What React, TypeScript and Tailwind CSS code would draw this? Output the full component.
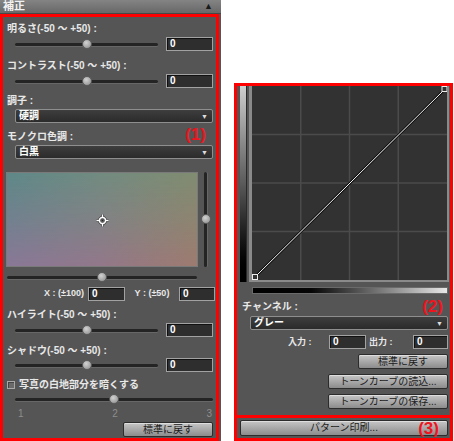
import React from 'react';

// shared bits for the dark "補正" panels
function Label({ children, className = '' }: { children: React.ReactNode; className?: string }) {
  return (
    <div className={`h-[14px] leading-[14px] text-[10px] font-bold text-[#e8e8e8] whitespace-nowrap ${className}`}>
      {children}
    </div>
  );
}

function NumBox({ className = '' }: { className?: string }) {
  return (
    <div
      className={`h-[14px] shrink-0 border border-[#a2a2a2] bg-[#2e2e2e] shadow-[inset_1px_1px_0_#111] flex items-center pl-[3px] text-[10px] font-bold text-white leading-none ${className}`}
    >
      0
    </div>
  );
}

function Track({ className = '', thumb }: { className?: string; thumb: string }) {
  return (
    <div className={`relative h-[3px] shrink-0 rounded-full bg-[#242424] shadow-[0_1px_0_#676767] ${className}`}>
      <div
        className={`absolute top-1/2 -translate-y-1/2 w-[10px] h-[10px] rounded-full border border-[#5c5c5c] bg-[radial-gradient(circle_at_40%_35%,#d2d2d2,#8a8a8a)] ${thumb}`}
      />
    </div>
  );
}

function SliderRow({ className = '' }: { className?: string }) {
  return (
    <div className={`h-[14px] flex items-center ${className}`}>
      <Track className="ml-[12px] w-[143px]" thumb="left-[67px]" />
      <NumBox className="ml-[8px] w-[47px]" />
    </div>
  );
}

function Select({ value, className = '' }: { value: string; className?: string }) {
  return (
    <div
      className={`h-[14px] flex items-center justify-between rounded-[2px] border border-[#8e8e8e] bg-gradient-to-b from-[#3e3e3e] to-[#2b2b2b] pl-[3px] pr-[4px] ${className}`}
    >
      <span className="text-[10px] font-bold text-white leading-none">{value}</span>
      <span className="text-[7px] text-[#dddddd] leading-none">▼</span>
    </div>
  );
}

function Btn({ children, className = '' }: { children: React.ReactNode; className?: string }) {
  return (
    <div
      className={`flex items-center justify-center rounded-[2px] border border-[#2c2c2c] bg-gradient-to-b from-[#c6c6c6] to-[#8c8c8c] shadow-[inset_0_1px_0_#dedede] text-[10px] text-[#1c1c1c] leading-none whitespace-nowrap ${className}`}
    >
      {children}
    </div>
  );
}

function Note({ n, className = '' }: { n: number; className?: string }) {
  return <span className={`text-[17px] font-bold text-[#f0141e] leading-none ${className}`}>({n})</span>;
}

function Crosshair() {
  return (
    <svg width="13" height="13" viewBox="0 0 13 13" className="absolute left-[89px] top-[41px]">
      <g stroke="#3a3a3a" strokeWidth="3" fill="none">
        <circle cx="6.5" cy="6.5" r="3" />
        <path d="M6.5 0.5v2.5M6.5 10v2.5M0.5 6.5h2.5M10 6.5h2.5" />
      </g>
      <g stroke="#ffffff" strokeWidth="1.4" fill="none">
        <circle cx="6.5" cy="6.5" r="3" />
        <path d="M6.5 0.5v2.5M6.5 10v2.5M0.5 6.5h2.5M10 6.5h2.5" />
      </g>
      <circle cx="6.5" cy="6.5" r="1" fill="#222" />
    </svg>
  );
}

function LeftPanel() {
  return (
    <div className="w-[221px] h-[441px] shrink-0 bg-[#555555] flex flex-col">
      <div className="h-[14px] shrink-0 flex items-center justify-between pl-[3px] pr-[8px] bg-gradient-to-b from-[#848484] to-[#686868] border-b border-[#474747]">
        <span className="text-[11px] font-bold text-[#f2f2f2] leading-none">補正</span>
        <span className="text-[9px] text-[#1a1a1a] leading-none">▲</span>
      </div>
      <div className="flex-1 mr-[2px] border-[3px] border-[#ff0000] flex flex-col">
        <Label className="mt-[5px] pl-[4px]">明るさ(-50 ～ +50) :</Label>
        <SliderRow className="mt-[1px]" />
        <Label className="mt-[8px] pl-[4px]">コントラスト(-50 ～ +50) :</Label>
        <SliderRow className="mt-[1px]" />
        <Label className="mt-[6px] pl-[4px]">調子 :</Label>
        <Select value="硬調" className="mt-[1px] ml-[12px] w-[198px]" />
        <div className="mt-[7px] h-[14px] flex items-center justify-between pl-[4px] pr-[10px]">
          <Label>モノクロ色調 :</Label>
          <Note n={1} className="-mt-[5px]" />
        </div>
        <Select value="白黒" className="mt-[1px] ml-[12px] w-[198px]" />

        <div className="mt-[13px] h-[95px] flex">
          <div className="relative ml-[3px] w-[192px] h-[95px] border border-[#7a7a7a] bg-[linear-gradient(to_right,#8a7898,#93788a_50%,#9f7b70)]">
            <div className="absolute inset-0 bg-[linear-gradient(to_right,#5e8888,#728b80_50%,#808c70)] [mask-image:linear-gradient(to_bottom,#000_0%,rgba(0,0,0,0.55)_50%,transparent_100%)]" />
            <Crosshair />
          </div>
          <div className="relative ml-[6px] w-[3px] h-[95px] rounded-full bg-[#242424] shadow-[1px_0_0_#676767]">
            <div className="absolute top-[42px] left-1/2 -translate-x-1/2 w-[10px] h-[10px] rounded-full border border-[#5c5c5c] bg-[radial-gradient(circle_at_40%_35%,#d2d2d2,#8a8a8a)]" />
          </div>
        </div>

        <div className="mt-[5px] h-[10px] flex items-center">
          <Track className="ml-[4px] w-[190px]" thumb="left-[90px]" />
        </div>

        <div className="mt-[5px] h-[14px] flex items-center">
          <span className="ml-[37px] w-[44px] text-right text-[9px] font-bold text-[#e8e8e8] whitespace-nowrap">X : (±100)</span>
          <NumBox className="ml-[4px] w-[37px]" />
          <span className="w-[54px] text-center text-[9px] font-bold text-[#e8e8e8] whitespace-nowrap">Y : (±50)</span>
          <NumBox className="w-[36px]" />
        </div>

        <Label className="mt-[7px] pl-[4px]">ハイライト(-50 ～ +50) :</Label>
        <SliderRow className="mt-[1px]" />
        <Label className="mt-[7px] pl-[4px]">シャドウ(-50 ～ +50) :</Label>
        <SliderRow />

        <div className="mt-[6px] h-[14px] flex items-center pl-[4px]">
          <div className="w-[8px] h-[8px] border border-[#a8a8a8] bg-[#6a6a6a] shadow-[inset_1px_1px_0_#444]" />
          <span className="ml-[4px] text-[10px] font-bold text-[#e8e8e8] leading-none">写真の白地部分を暗くする</span>
        </div>
        <div className="mt-[2px] h-[10px] flex items-center">
          <Track className="ml-[12px] w-[198px]" thumb="left-[94px]" />
        </div>
        <div className="mt-[5px] h-[10px] ml-[15px] w-[194px] flex items-center justify-between text-[10px] text-[#8e8e8e] leading-none">
          <span>1</span>
          <span>2</span>
          <span>3</span>
        </div>
        <Btn className="mt-[3px] ml-[120px] w-[90px] h-[15px]">標準に戻す</Btn>
      </div>
    </div>
  );
}

function CurveGraph() {
  const grid = [48.75, 97.5, 146.25];
  const gridY = [48.5, 97, 145.5];
  return (
    <svg width="195" height="194" viewBox="0 0 195 194" className="block">
      <rect width="195" height="194" fill="#323232" />
      {grid.map((x) => (
        <line key={'x' + x} x1={x} y1="0" x2={x} y2="194" stroke="#4b4b4b" strokeWidth="1.5" />
      ))}
      {gridY.map((y) => (
        <line key={'y' + y} x1="0" y1={y} x2="195" y2={y} stroke="#4b4b4b" strokeWidth="1.5" />
      ))}
      <line x1="3" y1="191" x2="193" y2="3" stroke="#111" strokeWidth="2.6" />
      <line x1="3" y1="191" x2="193" y2="3" stroke="#f4f4f4" strokeWidth="1" />
      <rect x="0.5" y="188.5" width="5" height="5" fill="#333" stroke="#eee" />
      <rect x="190" y="0.5" width="5" height="5" fill="#333" stroke="#eee" />
    </svg>
  );
}

function RightPanel() {
  return (
    <div className="mt-[83px] ml-[13px] w-[219px] h-[358px] shrink-0 bg-[#555555] border-[3px] border-[#ff0000] flex flex-col">
      <div className="h-[329px] flex flex-col">
        <div className="h-[196px] flex">
          <div className="ml-[3px] w-[7px] h-[196px] bg-gradient-to-b from-[#d0d0d0] via-[#5a5a5a] to-[#000000] border-r border-[#2a2a2a]" />
          <div className="ml-[2px] border-l-[3px] border-r-2 border-b-2 border-[#8a8a8a]">
            <CurveGraph />
          </div>
        </div>
        <div className="mt-[5px] ml-[15px] w-[196px] h-[7px] border border-[#6a6a6a] bg-[linear-gradient(to_right,#000_0%,#050505_30%,#e8e8e8_100%)]" />
        <div className="mt-[6px] h-[14px] flex items-center justify-between pl-[5px] pr-[7px]">
          <Label>チャンネル :</Label>
          <Note n={2} className="-mt-[1px]" />
        </div>
        <Select value="グレー" className="mt-[2px] ml-[13px] w-[198px]" />
        <div className="mt-[5px] h-[14px] flex items-center">
          <span className="ml-[51px] w-[41px] text-[9px] font-bold text-[#e8e8e8] leading-none">入力 :</span>
          <NumBox className="w-[37px]" />
          <span className="w-[47px] pl-[3px] text-[9px] font-bold text-[#e8e8e8] leading-none">出力 :</span>
          <NumBox className="w-[35px]" />
        </div>
        <Btn className="mt-[5px] ml-[121px] w-[90px] h-[15px]">標準に戻す</Btn>
        <Btn className="mt-[5px] ml-[91px] w-[120px] h-[15px]">トーンカーブの読込...</Btn>
        <Btn className="mt-[5px] ml-[91px] w-[120px] h-[15px]">トーンカーブの保存...</Btn>
      </div>
      <div className="h-[3px] bg-[#ff0000]" />
      <div className="relative mt-[2px] ml-[3px] w-[208px]">
        <Btn className="h-[16px]">パターン印刷...</Btn>
        <Note n={3} className="absolute right-[9px] top-0" />
      </div>
    </div>
  );
}

export default function App() {
  return (
    <div className="w-[454px] h-[441px] bg-white flex overflow-hidden font-['Liberation_Sans','Noto_Sans_CJK_JP',sans-serif]">
      <LeftPanel />
      <RightPanel />
    </div>
  );
}
